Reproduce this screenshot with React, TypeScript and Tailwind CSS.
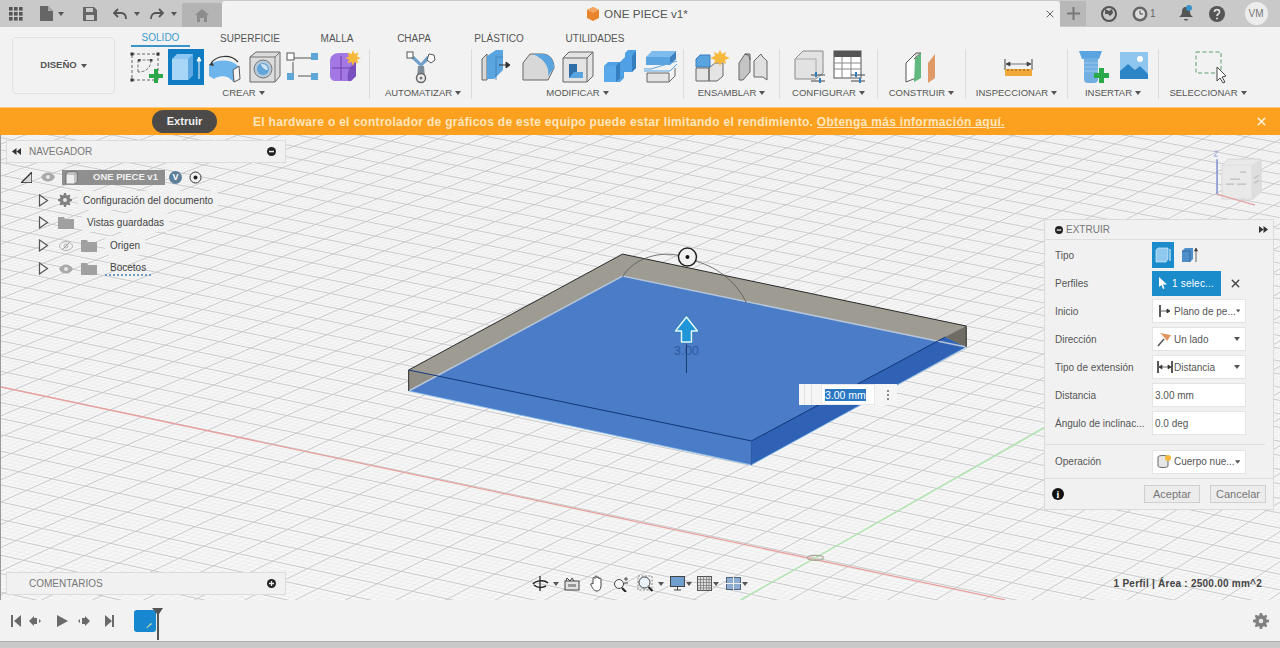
import { useMemo, type ReactNode } from 'react';
import { X } from 'lucide-react';

const Caret = ({ className = 'ml-1' }: { className?: string }) => (
  <svg width="6" height="4" viewBox="0 0 6 4" className={className}>
    <path d="M0 0h6L3 4z" fill="#555" />
  </svg>
);

const Ico = ({ children, w = 36, h = 36, vb }: { children: ReactNode; w?: number; h?: number; vb?: string }) => (
  <svg width={w} height={h} viewBox={vb ?? `0 0 ${w} ${h}`} className="shrink-0">
    {children}
  </svg>
);

// ---- ribbon icons ----
const SketchIcon = () => (
  <Ico>
    <rect x="4" y="5" width="26" height="26" fill="none" stroke="#666" strokeWidth="1" strokeDasharray="3 2" />
    <path d="M10 11h13M10 11v12M23 11c0 8-5 12-13 12" fill="none" stroke="#777" strokeDasharray="3 1.5" />
    {[[4, 5], [30, 5], [4, 31]].map(([x, y]) => <rect key={x * y + x} x={x - 1.5} y={y - 1.5} width="3" height="3" fill="#333" />)}
    <rect x="10" y="10" width="2.5" height="2.5" fill="#444" />
    <rect x="22" y="10" width="2.5" height="2.5" fill="#444" />
    <path d="M26 20h4v5h5v4h-5v5h-4v-5h-5v-4h5z" fill="#2ba84a" />
  </Ico>
);
const ExtrudeIcon = () => (
  <div className="flex h-9 w-9 items-center justify-center bg-[#0f7cc4]">
    <Ico>
      <path d="M4 10l5-5h16v21l-5 5H4z" fill="#8cc6f2" />
      <path d="M4 10h16v21H4z" fill="#a8d6f7" />
      <path d="M20 10l5-5v21l-5 5z" fill="#5ea9e2" />
      <path d="M31 30V9M29 12l2-4 2 4z" stroke="#fff" fill="#fff" strokeWidth="1" />
    </Ico>
  </div>
);
const RevolveIcon = () => (
  <Ico>
    <path d="M2 16c8-6 22-6 29 1l1 13-6 3c-4-7-14-7-19-3l-5-3z" fill="#6db5ea" />
    <path d="M26 21l6-4 1 13-6 3z" fill="#f5f5f5" stroke="#555" />
    <path d="M4 14C10 6 24 5 31 13" fill="none" stroke="#333" strokeWidth="1.2" />
    <path d="M2 16l3-3 2 4z" fill="#333" />
  </Ico>
);
const HoleIcon = () => (
  <Ico>
    <path d="M3 8l6-5h24v24l-5 6H3z" fill="#dcdcdc" stroke="#666" />
    <path d="M28 33V8H3M28 8l5-5" fill="none" stroke="#777" />
    <circle cx="16" cy="20" r="9" fill="#b5c9d8" stroke="#777" />
    <circle cx="16" cy="20" r="6" fill="#5fa5dc" />
    <path d="M14 15a6 6 0 0 1 7 6c-3 0-6-2-7-6z" fill="#cfe3f2" />
  </Ico>
);
const PatternIcon = () => (
  <Ico>
    <path d="M8 9h17M7 13v12M12 27h13" stroke="#555" strokeWidth="1" />
    <rect x="1" y="4" width="7" height="7" fill="#fff" stroke="#555" />
    <rect x="25" y="4" width="7" height="7" fill="#5fa5d6" />
    <rect x="1" y="24" width="7" height="7" fill="#5fa5d6" />
    <rect x="25" y="24" width="7" height="7" fill="#5fa5d6" />
  </Ico>
);
const FormIcon = () => (
  <Ico>
    <path d="M4 12c0-5 4-8 9-8h10l7 5v18l-5 5H10c-4 0-6-2-6-6z" fill="#a478e4" />
    <path d="M22 32c-1-7 0-14 8-19v14l-5 5z" fill="#7a4fbf" />
    <path d="M6 19h22M15 7v24" stroke="#6a3fb0" strokeWidth="1" />
    <path d="M27 1l1.500 4 4-1.500-1.500 4 4 1.500-4 1.500 1.500 4-4-1.500-1.500 4-1.500-4-4 1.500 1.500-4-4-1.500 4-1.500-1.500-4 4 1.500z" fill="#f6b93b" />
  </Ico>
);
const AutomateIcon = () => (
  <Ico>
    <path d="M8 9l10 9 10-9-4-2-6 7-7-7z" fill="#6f9fcb" />
    <path d="M15 17h6l1 13h-8z" fill="#7e8d98" />
    <circle cx="18" cy="29" r="4.500" fill="#eee" stroke="#666" strokeWidth="1.500" />
    <circle cx="18" cy="29" r="1.500" fill="#777" />
    <rect x="4" y="3" width="6" height="6" fill="#fff" stroke="#555" />
    <path d="M26 5l5 1 1 5-4 3-4-3z" fill="#fff" stroke="#555" />
  </Ico>
);
const PressPullIcon = () => (
  <Ico>
    <path d="M3 10l5-5v26H3z" fill="#d8d8d8" stroke="#666" />
    <path d="M8 7l9-6h7v20l-9 9H8z" fill="#5aa5e0" />
    <path d="M17 31V8h7" fill="none" stroke="#3a7cb8" strokeWidth="0.800" />
    <path d="M20 16h10M27 13l4 3-4 3z" stroke="#333" fill="#333" />
  </Ico>
);
const FilletIcon = () => (
  <Ico>
    <path d="M3 14l7-9h12c8 0 12 6 12 14l-6 12H3z" fill="#d8d8d8" stroke="#666" />
    <path d="M13 5h9c8 0 12 6 12 14l-6 8c2-9-4-17-15-22z" fill="#5aa5e0" />
  </Ico>
);
const ShellIcon = () => (
  <Ico>
    <path d="M2 9l6-6h24v24l-6 6H2z" fill="#e4e4e4" stroke="#666" />
    <path d="M2 9h24v24M26 9l6-6" fill="none" stroke="#666" />
    <path d="M8 15h8v8h6v6H8z" fill="#5aa5e0" />
    <path d="M8 15h8v8h-3l-5 6z" fill="#2f6fa6" />
  </Ico>
);
const CombineIcon = () => (
  <Ico>
    <path d="M2 17l4-4h12l5-5V4l3-3h8v18l-4 4h-8v6l-4 4H2z" fill="#4fa0e4" />
    <path d="M2 17h12v16H2z" fill="#5aa9ea" />
    <path d="M14 17l4-4v16l-4 4z" fill="#357fc0" />
    <path d="M30 7l4-5v17l-4 4z" fill="#357fc0" />
  </Ico>
);
const OffsetIcon = () => (
  <Ico>
    <path d="M3 8l6-6h24l-6 6z" fill="#7dbcec" />
    <path d="M3 8h24v8H3z" fill="#5aa5e0" />
    <path d="M27 8l6-6v8l-6 6z" fill="#3d80c0" />
    <path d="M1 20l7 0 26-8M1 22h26l7-7" stroke="#5aa5e0" fill="none" />
    <path d="M4 24h22v9H4z" fill="#e4e4e4" stroke="#666" />
    <path d="M26 33l6-6v-8" fill="none" stroke="#666" />
  </Ico>
);
const Sun = ({ x, y }: { x: number; y: number }) => (
  <path transform={`translate(${x} ${y})`} d="M0-8l2 4 4-2-1 4 5 2-5 2 1 4-4-2-2 4-2-4-4 2 1-4-5-2 5-2-1-4 4 2z" fill="#f6b93b" />
);
const NewCompIcon = () => (
  <Ico>
    <path d="M2 10l4-4h10v12H2z" fill="#5aa5e0" stroke="#3d80c0" />
    <path d="M2 19h13v13H2zM15 19l6-5h8v13l-6 5h-8z" fill="#e4e4e4" stroke="#666" />
    <Sun x={26} y={9} />
  </Ico>
);
const JointIcon = () => (
  <Ico>
    <path d="M4 14l6-9h5v18l-7 8H4z" fill="#c4c4c4" stroke="#666" />
    <path d="M19 12l7-7 1 2 5 5v19l-4-3-9 0z" fill="#e0e0e0" stroke="#666" />
    <path d="M10 5c3 0 5 3 5 6" fill="none" stroke="#555" />
  </Ico>
);
const Sliders = ({ x, y }: { x: number; y: number }) => (
  <g transform={`translate(${x} ${y})`} stroke="#444" strokeWidth="1.200">
    <path d="M0 0h14M0 6h14" />
    <path d="M5-3v5M9 3v5" stroke="#2f7fc0" strokeWidth="2" />
  </g>
);
const ParamsIcon = () => (
  <Ico>
    <path d="M3 10l8-8h20v22l-7 6H3z" fill="#e2e2e2" stroke="#888" />
    <path d="M3 10h21v20" fill="none" stroke="#aaa" />
    <Sliders x={19} y={26} />
  </Ico>
);
const TableIcon = () => (
  <Ico>
    <rect x="3" y="2" width="27" height="27" fill="#fff" stroke="#555" />
    <rect x="3" y="2" width="27" height="6" fill="#555" />
    <path d="M3 14h27M3 20h27M11 8v21M20 8v21" stroke="#888" />
    <Sliders x={20} y={26} />
  </Ico>
);
const PlaneIcon = () => (
  <Ico>
    <path d="M2 14l10-10v25L2 33z" fill="#fff" stroke="#555" />
    <path d="M12 4h5l-7 6" fill="#ddd" stroke="#555" />
    <path d="M11 10l6-6v25L10 33z" fill="#62b97f" />
    <path d="M24 14l7-9v24l-7 5z" fill="#df9a68" />
  </Ico>
);
const MeasureIcon = () => (
  <Ico>
    <path d="M6 10v11M33 10v11" stroke="#444" />
    <path d="M7 15h25M7 15l4-2v4zM32 15l-4-2v4z" stroke="#444" fill="#444" strokeWidth="0.700" />
    <rect x="6" y="20" width="27" height="7" fill="#eea93a" />
    <path d="M9 20v2M13 20v2M17 20v2M21 20v2M25 20v2M29 20v2" stroke="#8a5c12" />
  </Ico>
);
const InsertDerivIcon = () => (
  <Ico>
    <path d="M1 2h23l-3 8H4z" fill="#5aa5e0" />
    <path d="M6 9h14v22c0 2-2 3-4 3h-6c-2 0-4-1-4-3z" fill="#71aee2" />
    <path d="M6 14h14M6 18h14M6 22h14" stroke="#9cc9ee" />
    <path d="M21 19h5v5h5v5h-5v5h-5v-5h-5v-5h5z" fill="#2ba84a" />
  </Ico>
);
const PictureIcon = () => (
  <Ico>
    <rect x="3" y="3" width="28" height="27" fill="#8fc6f0" />
    <path d="M3 30V22l8-7 7 6 5-4 8 8v5z" fill="#2d85c7" />
    <circle cx="23" cy="10" r="3" fill="#fff" />
  </Ico>
);
const SelectIcon = () => (
  <Ico w={40} h={36}>
    <rect x="6" y="3" width="25" height="21" fill="none" stroke="#5d9f6d" strokeDasharray="4 2.500" />
    <path d="M27 18v14l3-3 3 5 2-1-3-5 4-1z" fill="#fff" stroke="#444" />
  </Ico>
);

const Group = ({ label, w, children, last, row = 'gap-[4px]', lbl = '' }: { label: string; w: string; children: ReactNode; last?: boolean; row?: string; lbl?: string }) => (
  <div className={`flex h-[50px] flex-col items-center justify-between ${w} ${last ? '' : 'border-r border-[#dcdcdc]'}`}>
    <div className={`flex h-[36px] items-center justify-center ${row}`}>{children}</div>
    <div className={`flex items-center text-[9.500px] leading-[12px] text-[#555] ${lbl}`}>
      {label}
      <Caret className="ml-[3px]" />
    </div>
  </div>
);

// ---- top bar ----
const TopBar = () => (
  <div className="flex h-[27px] items-end bg-[#c9c9c9]">
    <div className="flex h-full w-[182px] items-center text-[#555]">
      <svg width="14" height="14" viewBox="0 0 14 14" className="ml-[9px]" fill="#555">
        {[0, 5, 10].flatMap((x) => [0, 5, 10].map((y) => <rect key={`${x}${y}`} x={x} y={y} width="3.600" height="3.600" />))}
      </svg>
      <svg width="13" height="15" viewBox="0 0 13 15" className="ml-[17px]"><path d="M0 0h8l5 5v10H0z" fill="#666" /><path d="M8 0v5h5z" fill="#aaa" /></svg>
      <Caret className="ml-[5px]" />
      <svg width="14" height="14" viewBox="0 0 14 14" className="ml-[19px]"><path d="M0 0h11l3 3v11H0z" fill="#666" /><rect x="3" y="1" width="7" height="4" fill="#ccc" /><rect x="3" y="8" width="8" height="5" fill="#ccc" /></svg>
      <svg width="14" height="12" viewBox="0 0 14 12" className="ml-[16px]"><path d="M5 1L1 5l4 4M1 5h7c3 0 5 2 5 6" fill="none" stroke="#555" strokeWidth="1.800" /></svg>
      <Caret className="ml-[7px]" />
      <svg width="14" height="12" viewBox="0 0 14 12" className="ml-[10px]"><path d="M9 1l4 4-4 4M13 5H6c-3 0-5 2-5 6" fill="none" stroke="#555" strokeWidth="1.800" /></svg>
      <Caret className="ml-[7px]" />
    </div>
    <div className="flex h-[24px] w-[40px] items-center justify-center self-end rounded-t-[2px] bg-[#b4b4b4]">
      <svg width="14" height="13" viewBox="0 0 14 13"><path d="M7 0l7 6h-2v7H9V9H5v4H2V6H0z" fill="#8c8c8c" /></svg>
    </div>
    <div className="relative flex h-[26px] w-[838px] items-center justify-center rounded-t-[3px] bg-[#f2f2f2] pr-[8px] text-[11.700px] text-[#555]">
      <svg width="14" height="14" viewBox="0 0 14 14" className="mr-[4px]">
        <path d="M7 0l6 3v8l-6 3-6-3V3z" fill="#e8842c" />
        <path d="M7 0l6 3-6 3-6-3z" fill="#f3a866" />
      </svg>
      ONE PIECE v1*
      <X size={12} strokeWidth={2} className="absolute right-[4px] top-[7px] text-[#666]" />
    </div>
    <div className="flex h-[25px] w-[26px] items-center justify-center self-center bg-[#b8b8b8] text-[#777]">
      <svg width="13" height="13" viewBox="0 0 13 13"><path d="M6.500 0v13M0 6.500h13" stroke="#777" strokeWidth="2" /></svg>
    </div>
    <div className="flex h-full flex-1 items-center text-[#555]">
      <svg width="16" height="16" viewBox="0 0 16 16" className="ml-[15px]"><circle cx="8" cy="8" r="7" fill="none" stroke="#555" strokeWidth="2" /><path d="M4 3l4 2 3-2 1 4-3 3-2-2-3 0z" fill="#555" /></svg>
      <svg width="16" height="16" viewBox="0 0 16 16" className="ml-[15px]"><circle cx="8" cy="8" r="7.500" fill="#666" /><circle cx="8" cy="8" r="5" fill="#ddd" /><path d="M8 4.500V8h3" stroke="#444" fill="none" /></svg>
      <span className="ml-[2px] text-[10px] text-[#666]">1</span>
      <svg width="14" height="17" viewBox="0 0 14 17" className="ml-[23px]"><path d="M7 2c3 0 4 2 4 5 0 3 2 4 3 5H0c1-1 3-2 3-5 0-3 1-5 4-5zM5 14h4c0 2-4 2-4 0z" fill="#555" /><circle cx="10" cy="3" r="3" fill="#3a93c8" /></svg>
      <svg width="16" height="16" viewBox="0 0 16 16" className="ml-[16px]"><circle cx="8" cy="8" r="8" fill="#555" /><path d="M5.500 6c0-3.300 5-3.300 5 0 0 2-2.500 2-2.500 4" fill="none" stroke="#ddd" strokeWidth="1.700" /><circle cx="8" cy="12.500" r="1" fill="#ddd" /></svg>
      <div className="ml-[20px] flex h-[23px] w-[23px] items-center justify-center rounded-full bg-[#ececec] text-[10px] text-[#777]">VM</div>
    </div>
  </div>
);

const TABS: [string, string][] = [
  ['SUPERFICIE', 'w-[120px]'],
  ['MALLA', 'w-[54px]'],
  ['CHAPA', 'w-[100px]'],
  ['PLÁSTICO', 'w-[70px]'],
  ['UTILIDADES', 'w-[122px]'],
];

const Ribbon = () => (
  <div className="flex h-[80px] bg-[#f2f2f2]">
    <div className="ml-[12px] mt-[10px] flex h-[57px] w-[103px] items-center justify-center rounded-[4px] border border-[#e2e2e2] text-[9.500px] font-bold text-[#555]">
      DISEÑO
      <Caret />
    </div>
    <div className="ml-[12px] flex flex-col">
      <div className="mt-[3px] flex h-[16px] items-center pl-[4px] text-[10px] text-[#555]">
        <div className="flex h-[18px] w-[59px] justify-center border-b-2 border-[#3a94c8] pt-[1px] font-medium text-[#3a9ccf]">SOLIDO</div>
        {TABS.map(([t, w]) => (
          <div key={t} className={`text-center ${w}`}>{t}</div>
        ))}
      </div>
      <div className="mt-[3px] flex">
        <Group label="CREAR" w="w-[243px]" row="gap-[3.500px] pr-[6px]" lbl="pr-[9px]">
          <SketchIcon />
          <ExtrudeIcon />
          <RevolveIcon />
          <HoleIcon />
          <PatternIcon />
          <FormIcon />
        </Group>
        <Group label="AUTOMATIZAR" w="w-[102px]" lbl="pl-[5px]"><AutomateIcon /></Group>
        <Group label="MODIFICAR" w="w-[212px]" row="gap-[5px] pl-[2px]">
          <PressPullIcon />
          <FilletIcon />
          <ShellIcon />
          <CombineIcon />
          <OffsetIcon />
        </Group>
        <Group label="ENSAMBLAR" w="w-[96px]" row="gap-[5px] pl-[2px]">
          <NewCompIcon />
          <JointIcon />
        </Group>
        <Group label="CONFIGURAR" w="w-[98px]" row="gap-[3px] pl-[2px]">
          <ParamsIcon />
          <TableIcon />
        </Group>
        <Group label="CONSTRUIR" w="w-[88px]"><PlaneIcon /></Group>
        <Group label="INSPECCIONAR" w="w-[102px]"><MeasureIcon /></Group>
        <Group label="INSERTAR" w="w-[91px]" row="gap-[3px] pl-[4px]">
          <InsertDerivIcon />
          <PictureIcon />
        </Group>
        <Group label="SELECCIONAR" w="w-[98px]" last row="pl-[4px]"><SelectIcon /></Group>
      </div>
    </div>
  </div>
);

const Banner = () => (
  <div className="relative flex h-[28px] items-center border-t border-[#ffc878] bg-[#fba11f]">
    <div className="ml-[152px] flex h-[23px] w-[65px] items-center justify-center rounded-full bg-[#4b4a48] text-[11px] font-bold text-[#f0f0f0]">
      Extruir
    </div>
    <div className="ml-[36px] whitespace-nowrap text-[12px] font-bold tracking-[0.295px] text-[#ffe6bf]">
      El hardware o el controlador de gráficos de este equipo puede estar limitando el rendimiento.{' '}
      <span className="underline">Obtenga más información aquí.</span>
    </div>
    <X size={13} strokeWidth={3} className="absolute left-[1255px] top-[7px] text-[#fff3df]" />
  </div>
);

// ---- canvas grid: the plane is mapped with a mild perspective around the origin ----
const project = (u: number, v: number) => {
  const w = 1 - 0.002 * u + 0.006 * v;
  return [815 + (35 * u + 21 * v) / w, 558 + (7.35 * u - 12 * v) / w];
};

const gridPath = (sub: number, skipMajor: boolean) => {
  let d = '';
  const seg = (a: number[], b: number[]) => {
    d += `M${a[0].toFixed(1)} ${a[1].toFixed(1)}L${b[0].toFixed(1)} ${b[1].toFixed(1)}`;
  };
  for (let i = -45 * sub; i <= 30 * sub; i++) {
    if (skipMajor && i % sub === 0) continue;
    seg(project(i / sub, -25), project(i / sub, 65));
  }
  for (let i = -25 * sub; i <= 65 * sub; i++) {
    if (skipMajor && i % sub === 0) continue;
    seg(project(-45, i / sub), project(30, i / sub));
  }
  return d;
};

const Scene = () => {
  const major = useMemo(() => gridPath(1, false), []);
  const minor = useMemo(() => gridPath(5, true), []);
  return (
    <svg className="absolute inset-0 h-full w-full" viewBox="0 135 1280 465">
      <path d={minor} stroke="#e9e9e9" strokeWidth="0.600" fill="none" />
      <path d={major} stroke="#c4c5c8" strokeWidth="0.900" fill="none" />
      <path d="M0 387L1005 600" stroke="#e6a19e" strokeWidth="1.300" />
      <path d="M740 600L815 558L1044 428" stroke="#b4e6b2" strokeWidth="1.500" fill="none" />
      <ellipse cx="815" cy="558" rx="8" ry="2.500" fill="none" stroke="#a9a595" strokeWidth="1.200" />

      {/* extruded plate */}
      <path d="M408 391L622 276L966 347L751 465Z" fill="#4a7cc8" />
      <path d="M408 370L622 254L966 326V347L622 276L408 391Z" fill="#9d9b92" />
      <path d="M751 441L945 337L966 347L751 465Z" fill="#2f62b4" />
      <path d="M945 337L966 326V347Z" fill="#6f6d63" />
      <path d="M408 370V391L435 377Z" fill="#8f8d84" />
      <path d="M408 391L622 276L966 347" fill="none" stroke="#b5c4d8" strokeWidth="1.600" />
      <path d="M408 391L751 465L966 347" fill="none" stroke="#8fc3f0" strokeWidth="0.800" />
      <path d="M408 370L622 254L966 326V347M408 370V391" fill="none" stroke="#2b2b2b" strokeWidth="1" />
      <path d="M408 370L751 441M751 441L945 337" fill="none" stroke="#12367a" strokeWidth="1" />
      <path d="M751 441V465" stroke="#2a5aa8" />

      {/* gizmo */}
      <path d="M622 277C632 258 662 250 680 256M695 261C720 268 738 285 746 303" fill="none" stroke="#555" strokeWidth="0.800" />
      <circle cx="687" cy="257" r="9" fill="#f2f2f2" stroke="#222" strokeWidth="1.500" />
      <circle cx="687" cy="257" r="2" fill="#111" />
      <text x="686" y="355" textAnchor="middle" fontSize="13" fill="#2f5aa0" fontFamily="Liberation Sans, sans-serif">3.00</text>
      <path d="M686 344V373" stroke="#1c3c70" strokeWidth="1" />
      <path d="M686 317L697 331H691V342H681V331H675Z" fill="#1e96d8" stroke="#2a7fb8" strokeWidth="3" strokeLinejoin="round" />
      <path d="M686 317L697 331H691V342H681V331H675Z" fill="#1e96d8" stroke="#e8f6fb" strokeWidth="1.500" strokeLinejoin="round" />

      {/* view cube */}
      <path d="M1222 165L1228 159H1261V192L1252 199H1222Z" fill="#e9e9e9" stroke="#d8d8d8" />
      <path d="M1222 165H1253L1261 159V192L1252 199V165" fill="#dedede" stroke="#d8d8d8" strokeWidth="0.500" />
      <path d="M1226 184h8M1237 184h9M1230 179h10M1240 172h6M1254 178l5-3M1254 183l5-3" stroke="#bdbdbd" strokeWidth="1.200" />
      <path d="M1217 194V159" stroke="#7f8fd0" strokeWidth="1.500" />
      <path d="M1217 194L1255 205" stroke="#e3a3a3" strokeWidth="1.500" />
      <path d="M1214 151h4l-4 5h4" fill="none" stroke="#8a9ad0" strokeWidth="0.800" />
    </svg>
  );
};

// ---- browser ----
const EyeIcon = ({ off, x = 'ml-0' }: { off?: boolean; x?: string }) => (
  <svg width="14" height="10" viewBox="0 0 14 10" className={x}>
    <path d="M0 5c3-6 11-6 14 0-3 6-11 6-14 0z" fill={off ? 'none' : '#a9a9a9'} stroke={off ? '#b0b0b0' : 'none'} />
    <circle cx="7" cy="5" r="2" fill={off ? 'none' : '#e8e8e8'} stroke={off ? '#b0b0b0' : 'none'} />
    {off && <path d="M3 9l8-8" stroke="#a0a0a0" />}
  </svg>
);
const Folder = ({ x = 'ml-0' }: { x?: string }) => (
  <svg width="16" height="12" viewBox="0 0 16 12" className={x}>
    <path d="M0 0h6l1 2h9v10H0z" fill="#a0a0a0" />
  </svg>
);
const Expand = () => (
  <svg width="11" height="13" viewBox="0 0 11 13" className="ml-[37px] shrink-0">
    <path d="M1.500 1L9.500 6.500 1.500 12z" fill="#f4f4f4" stroke="#555" strokeWidth="1.200" />
  </svg>
);
const Gear = ({ size = 14, className = '' }: { size?: number; className?: string }) => (
  <svg width={size} height={size} viewBox="0 0 14 14" className={className}>
    <path d="M6 0h2l.4 2 1.300.5L11.400 1.500l1.100 1.100-1 1.700.5 1.300 2 .4v2l-2 .4-.5 1.300 1 1.700-1.100 1.100-1.700-1-1.300.5-.4 2H6l-.4-2-1.300-.5-1.700 1-1.100-1.100 1-1.700L2 8.400 0 8V6l2-.4.5-1.300-1-1.700L2.600 1.500l1.700 1 1.300-.5z" fill="#808080" />
    <circle cx="7" cy="7" r="2" fill="#e8e8e8" />
  </svg>
);

const TreeRow = ({ children }: { children: ReactNode }) => (
  <div className="flex h-[22.800px] items-center text-[10px] text-[#444]">{children}</div>
);

const Browser = () => (
  <div className="absolute left-[5px] top-[5px] w-[280px]">
    <div className="flex h-[23px] items-center border border-[#dcdcdc] bg-[#f1f1f1] pl-[5px] pr-[9px] text-[10px] text-[#777]">
      <svg width="9" height="7" viewBox="0 0 9 7"><path d="M4.500 0v7L0 3.500zM9 0v7L4.500 3.500z" fill="#333" /></svg>
      <span className="ml-[8px] flex-1">NAVEGADOR</span>
      <svg width="9" height="9" viewBox="0 0 9 9"><circle cx="4.500" cy="4.500" r="4.500" fill="#222" /><rect x="2" y="3.800" width="5" height="1.500" fill="#eee" /></svg>
    </div>
    <div className="mt-[3px] -ml-[5px]">
      <TreeRow>
        <svg width="11" height="11" viewBox="0 0 11 11" className="ml-[20px]"><path d="M0 11L11 0v11z" fill="#d8d8d8" stroke="#333" strokeWidth="1.300" /></svg>
        <EyeIcon x="ml-[9px]" />
        <div className="ml-[7px] flex h-[15px] w-[103px] items-center bg-[#8f8f8f] pl-[3px] text-[9.500px] font-bold text-[#f0f0f0]">
          <svg width="13" height="13" viewBox="0 0 13 13"><path d="M1 3l2-2h9v10l-2 2H1z" fill="#eee" stroke="#555" strokeWidth="0.700" /><path d="M1 3h9v10M10 3l2-2" fill="none" stroke="#777" strokeWidth="0.700" /></svg>
          <span className="ml-[15px]">ONE PIECE v1</span>
        </div>
        <div className="ml-[4px] flex h-[13px] w-[13px] items-center justify-center rounded-full bg-[#5d7f9c] text-[9px] font-bold text-white">V</div>
        <svg width="13" height="13" viewBox="0 0 13 13" className="ml-[7px]"><circle cx="6.500" cy="6.500" r="5.500" fill="#f2f2f2" stroke="#333" /><circle cx="6.500" cy="6.500" r="2" fill="#222" /></svg>
      </TreeRow>
      <TreeRow>
        <Expand />
        <Gear className="ml-[9px]" />
        <span className="ml-[6px] rounded-[3px] bg-[#f1f1f1] px-[5px] py-[2px]">Configuración del documento</span>
      </TreeRow>
      <TreeRow>
        <Expand />
        <Folder x="ml-[9px]" />
        <span className="ml-[8px] rounded-[3px] bg-[#f1f1f1] px-[5px] py-[2px]">Vistas guardadas</span>
      </TreeRow>
      <TreeRow>
        <Expand />
        <EyeIcon off x="ml-[10px]" />
        <Folder x="ml-[8px]" />
        <span className="ml-[8px] rounded-[3px] bg-[#f1f1f1] px-[5px] py-[2px]">Origen</span>
      </TreeRow>
      <TreeRow>
        <Expand />
        <EyeIcon x="ml-[10px]" />
        <Folder x="ml-[8px]" />
        <span className="ml-[8px] border-b-2 border-dotted border-[#6d9cc4] px-[5px] leading-[12px]">Bocetos</span>
      </TreeRow>
    </div>
  </div>
);

const Comments = () => (
  <div className="absolute bottom-[5px] left-[5px] flex h-[23px] w-[280px] items-center border border-[#dcdcdc] bg-[#f1f1f1] pl-[22px] pr-[9px] text-[10px] text-[#777]">
    <span className="flex-1">COMENTARIOS</span>
    <svg width="9" height="9" viewBox="0 0 9 9"><circle cx="4.500" cy="4.500" r="4.500" fill="#222" /><path d="M2 4.500h5M4.500 2v5" stroke="#eee" strokeWidth="1.300" /></svg>
  </div>
);

// ---- extrude dialog ----
const Row = ({ label, children, h = 'h-[28px]' }: { label: string; children: ReactNode; h?: string }) => (
  <div className={`flex items-center ${h}`}>
    <div className="w-[107px] whitespace-nowrap pl-[10px] text-[10px] text-[#555]">{label}</div>
    {children}
  </div>
);
const Select = ({ icon, text }: { icon: ReactNode; text: string }) => (
  <div className="flex h-[24px] w-[94px] items-center border border-[#e4e4e4] bg-white pl-[2px] pr-[5px] text-[10px] text-[#555]">
    <span className="flex w-[19px] shrink-0 items-center justify-center">{icon}</span>
    <span className="flex-1 whitespace-nowrap">{text}</span>
    <Caret className="ml-0" />
  </div>
);
const Field = ({ text }: { text: string }) => (
  <div className="flex h-[24px] w-[94px] items-center border border-[#e4e4e4] bg-white pl-[2px] text-[10px] text-[#555]">{text}</div>
);

const ExtrudeDialog = () => (
  <div className="absolute right-[6px] top-[84px] w-[230px] border border-[#dadada] bg-[#f1f1f1]">
    <div className="flex h-[20px] items-center border-b border-[#dedede] pl-[10px] pr-[5px] text-[10px] text-[#777]">
      <svg width="8" height="8" viewBox="0 0 9 9"><circle cx="4.500" cy="4.500" r="4.500" fill="#222" /><rect x="2" y="3.800" width="5" height="1.500" fill="#eee" /></svg>
      <span className="ml-[3px] flex-1">EXTRUIR</span>
      <svg width="9" height="7" viewBox="0 0 9 7"><path d="M0 0v7l4.500-3.500zM4.500 0v7L9 3.500z" fill="#333" /></svg>
    </div>
    <div className="pt-[1px]">
      <Row label="Tipo">
        <div className="flex h-[26px] w-[22px] items-center justify-center bg-[#1b8ccb]">
          <svg width="16" height="16" viewBox="0 0 16 16"><path d="M1 3l2-2h10v11l-2 3H1z" fill="#8fc9f0" stroke="#d4ecfb" strokeWidth="0.700" /><path d="M15 2v12" stroke="#fff" /></svg>
        </div>
        <svg width="17" height="17" viewBox="0 0 17 17" className="ml-[7px]"><path d="M1 4l3-3h8v11l-3 3H1z" fill="#4e8ec9" /><path d="M1 4h8v11" fill="none" stroke="#2a5e90" strokeWidth="0.700" /><path d="M15 2v13M13.500 4L15 1l1.500 3z" stroke="#444" fill="#444" strokeWidth="0.800" /></svg>
      </Row>
      <Row label="Perfiles">
        <div className="flex h-[25px] w-[69px] items-center bg-[#1b8ccb] pl-[7px] text-[10px] text-white">
          <svg width="8" height="12" viewBox="0 0 8 12"><path d="M0 0v10l2.500-2 1.500 4 1.500-.5-1.500-4H8z" fill="#fff" /></svg>
          <span className="ml-[5px] whitespace-nowrap tracking-[0.2px]">1 selec...</span>
        </div>
        <X size={13} strokeWidth={2.500} className="ml-[8px] text-[#444]" />
      </Row>
      <Row label="Inicio">
        <Select
          text="Plano de pe..."
          icon={<svg width="14" height="14" viewBox="0 0 14 14"><path d="M2 1v12" stroke="#222" strokeWidth="1.500" /><path d="M3 7h7M9 5l3 2-3 2z" stroke="#333" fill="#333" strokeWidth="0.800" /></svg>}
        />
      </Row>
      <Row label="Dirección">
        <Select
          text="Un lado"
          icon={<svg width="15" height="15" viewBox="0 0 15 15"><path d="M3 1l11 2-4 6-3-4z" fill="#e2955f" /><path d="M1 14l6-7" stroke="#555" strokeWidth="1.500" /></svg>}
        />
      </Row>
      <Row label="Tipo de extensión">
        <Select
          text="Distancia"
          icon={<svg width="16" height="14" viewBox="0 0 16 14"><path d="M1 1v12M15 1v12" stroke="#222" strokeWidth="1.500" /><path d="M2 7h12M2 7l3-2v4zM14 7l-3-2v4z" stroke="#333" fill="#333" strokeWidth="0.700" /></svg>}
        />
      </Row>
      <Row label="Distancia"><Field text="3.00 mm" /></Row>
      <Row label="Ángulo de inclinac..."><Field text="0.0 deg" /></Row>
      <div className="mr-[8px] mt-[7px] border-t border-[#dcdcdc]" />
      <Row label="Operación" h="h-[33px]">
        <Select
          text="Cuerpo nue..."
          icon={<svg width="15" height="15" viewBox="0 0 15 15"><path d="M1 3c0-2 10-2 10 0v9c0 2-10 2-10 0z" fill="#e6e6e6" stroke="#666" /><circle cx="11" cy="4" r="3" fill="#f6b93b" /></svg>}
        />
      </Row>
    </div>
    <div className="flex h-[31px] items-center border-t border-[#dedede] pl-[7px] pr-[7px] text-[11px] text-[#777]">
      <div className="flex h-[12px] w-[12px] items-center justify-center rounded-full bg-[#111] font-['Liberation_Serif',serif] text-[10px] font-bold text-white">i</div>
      <div className="ml-auto flex h-[18px] w-[56px] items-center justify-center border border-[#cfcfcf] bg-[#ececec]">Aceptar</div>
      <div className="ml-[10px] flex h-[18px] w-[56px] items-center justify-center border border-[#cfcfcf] bg-[#ececec]">Cancelar</div>
    </div>
  </div>
);

const DimInput = () => (
  <div className="absolute left-[798px] top-[249px] flex h-[21px] w-[98px] items-center bg-[#f5f5f5]">
    <div className="ml-[5px] h-full w-[8px] border-x border-[#e2e2e2]" />
    <div className="ml-[9px] flex h-full w-[54px] items-center justify-start border border-[#e8e8e8] bg-white pl-[3px] text-[10.500px] leading-[12px]">
      <span className="bg-[#2a78c4] text-white">3.00 mm</span>
    </div>
    <div className="ml-[12px] flex flex-col gap-[2px]">
      <div className="h-[2px] w-[2px] bg-[#888]" />
      <div className="h-[2px] w-[2px] bg-[#888]" />
      <div className="h-[2px] w-[2px] bg-[#888]" />
    </div>
  </div>
);

// ---- bottom nav bar over the canvas ----
const ViewBar = () => (
  <div className="absolute bottom-[8px] left-[531px] flex items-center">
    <svg width="17" height="17" viewBox="0 0 17 17"><path d="M8 1v15" stroke="#444" strokeWidth="1.500" /><path d="M1 9c3-4 12-4 15-1" fill="none" stroke="#222" strokeWidth="1.500" /><path d="M2 10c3 3 8 3 12 1" fill="none" stroke="#222" strokeWidth="1.500" /></svg>
    <Caret className="ml-[4px]" />
    <svg width="16" height="14" viewBox="0 0 16 14" className="ml-[5px]"><rect x="1" y="4" width="14" height="9" fill="#e4e4e4" stroke="#444" /><rect x="4" y="7" width="8" height="3" fill="#999" /><path d="M2 4l1-3 3 3 2-3 2 3" fill="none" stroke="#444" /></svg>
    <svg width="16" height="17" viewBox="0 0 16 17" className="ml-[9px]"><path d="M4 9V3.500c0-1.500 2-1.500 2 0V2c0-1.500 2-1.500 2 0v1c0-1.500 2-1.500 2 0v1c0-1.500 2-1.500 2 0v7c0 3-2 5-4 5-3 0-4-2-6-6-1-2 1-2 2-1z" fill="#fff" stroke="#444" /></svg>
    <svg width="16" height="16" viewBox="0 0 16 16" className="ml-[8px]"><circle cx="6" cy="8" r="4.500" fill="#f6f6f6" stroke="#444" /><path d="M9 12l4 4" stroke="#222" strokeWidth="2" /><path d="M11 3h4M13 1v4M11 7h4" stroke="#444" /></svg>
    <svg width="17" height="17" viewBox="0 0 17 17" className="ml-[8px]"><rect x="1" y="1" width="14" height="14" fill="none" stroke="#888" strokeDasharray="2 1.500" /><circle cx="7.500" cy="7.500" r="5.500" fill="#e8f2f8" stroke="#444" /><path d="M11.500 12l4 4" stroke="#222" strokeWidth="2" /></svg>
    <Caret className="ml-[4px]" />
    <svg width="15" height="15" viewBox="0 0 15 15" className="ml-[6px]"><rect x="0.500" y="0.500" width="14" height="10" fill="#6f9fcf" stroke="#444" /><path d="M4 14h7M7.500 11v3" stroke="#444" /></svg>
    <Caret className="ml-[1px]" />
    <svg width="15" height="15" viewBox="0 0 15 15" className="ml-[5px]"><rect x="0.500" y="0.500" width="14" height="14" fill="#ddd" stroke="#555" /><path d="M3.500 0v15M6.500 0v15M9.500 0v15M12 0v15M0 3.500h15M0 6.500h15M0 9.500h15M0 12h15" stroke="#666" strokeWidth="0.600" /></svg>
    <Caret className="ml-[1px]" />
    <svg width="15" height="13" viewBox="0 0 15 13" className="ml-[7px]"><rect x="0.500" y="0.500" width="14" height="12" fill="#8facd2" stroke="#51627c" /><path d="M7.500 0v13M0 6.500h15" stroke="#f0f0f0" /></svg>
    <Caret className="ml-[1px]" />
  </div>
);

const Timeline = () => (
  <div className="flex h-[42px] items-center border-b border-[#aeaeae] bg-[#f2f2f2]">
    <svg width="110" height="12" viewBox="0 0 110 12" className="ml-[11px]" fill="#6a6a6a">
      <path d="M0 0h2v12H0zM10 0v12L3 6z" />
      <path d="M23 1v10l-5-5zM23 3h3v6h-3zM28 4v4l2-2z" />
      <path d="M46 0l11 6-11 6z" />
      <path d="M69 4v4l-2-2zM71 3h3v6h-3zM74 1v10l5-5z" />
      <path d="M94 0l7 6-7 6zM101 0h2v12h-2z" />
    </svg>
    <div className="relative ml-[13px] h-[22px] w-[22px] rounded-[3px] bg-[#1787cf]">
      <svg width="6" height="5" viewBox="0 0 6 5" className="absolute left-[12px] top-[13px]"><path d="M0 5l5-5 1 1-5 4z" fill="#d7e8a8" /></svg>
      <svg width="11" height="32" viewBox="0 0 11 32" className="absolute -right-[7px] -top-[2px]"><path d="M0 0h11L7 6v26H5V6z" fill="#555" /></svg>
    </div>
    <Gear size={16} className="ml-auto mr-[11px]" />
  </div>
);

export default function App() {
  return (
    <div className="flex h-[648px] w-[1280px] flex-col overflow-hidden bg-[#c9c9c9] font-['Liberation_Sans',Arial,sans-serif]">
      <TopBar />
      <Ribbon />
      <Banner />
      <div className="relative h-[465px] overflow-hidden border-l border-[#999] bg-[#f7f7f7]">
        <Scene />
        <Browser />
        <Comments />
        <ExtrudeDialog />
        <DimInput />
        <ViewBar />
        <div className="absolute bottom-[9px] right-[18px] text-[10px] font-bold tracking-[0.25px] text-[#444]">1 Perfil | Área : 2500.00 mm^2</div>
      </div>
      <Timeline />
    </div>
  );
}
